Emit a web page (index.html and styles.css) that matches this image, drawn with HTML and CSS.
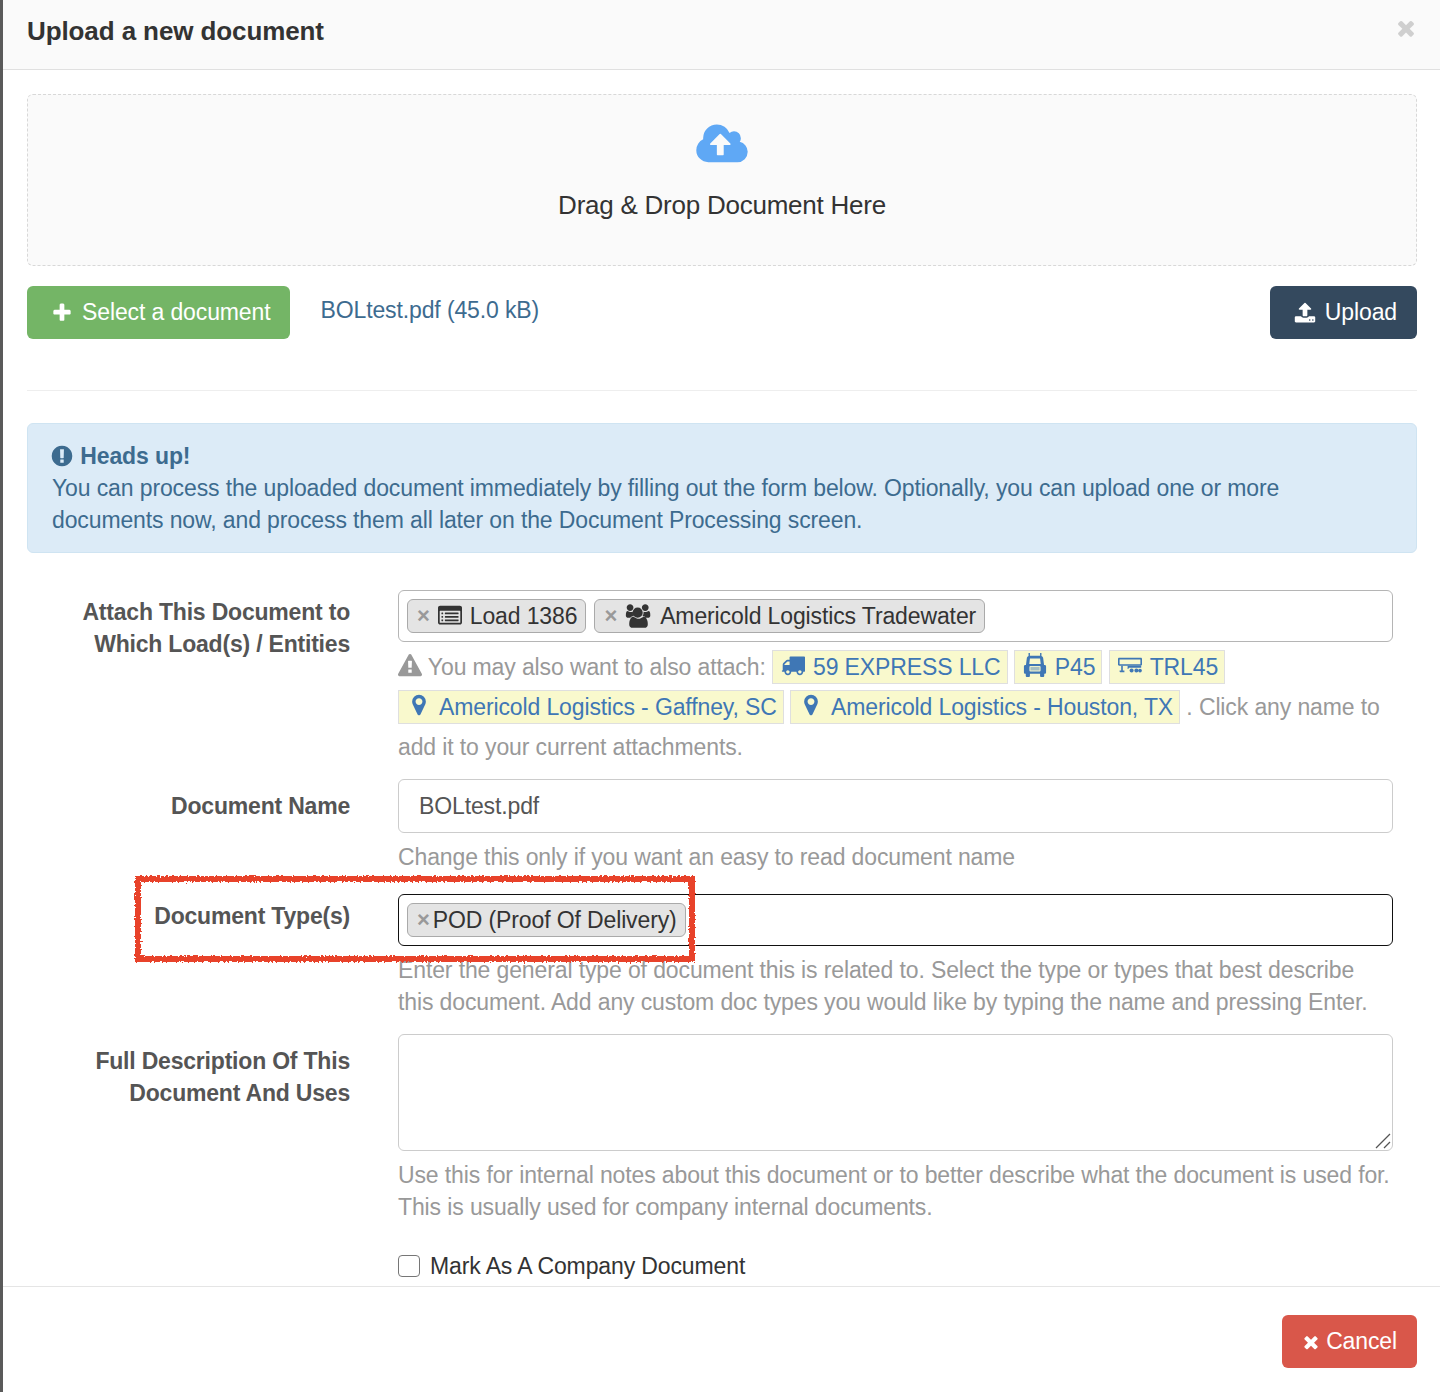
FILE: index.html
```html
<!DOCTYPE html>
<html lang="en">
<head>
    <meta charset="UTF-8">
    <meta name="viewport" content="width=device-width, initial-scale=1.0">
    <title>Upload a new document</title>
    <link rel="stylesheet" href="styles.css">
</head>
<body>

    <svg class="icon-defs" aria-hidden="true">
        <symbol id="i-cloud" viewBox="0 0 1920 1792"><path d="M1280 864q0-14-9-23l-352-352q-9-9-23-9t-23 9l-351 351q-10 12-10 24 0 14 9 23t23 9h224v352q0 13 9.5 22.5t22.5 9.5h192q13 0 22.5-9.5t9.5-22.5v-352h224q13 0 22.5-9.5t9.5-22.5zm640 288q0 159-112.5 271.5t-271.5 112.5h-1088q-185 0-316.5-131.5t-131.5-316.5q0-130 70-240t188-165q-2-30-2-43 0-212 150-362t362-150q156 0 285.5 87t188.5 231q71-62 166-62 106 0 181 75t75 181q0 76-41 138 130 31 213.5 135.5t83.5 238.5z"/></symbol>
        <symbol id="i-plus" viewBox="0 0 1792 1792"><path d="M1600 736v192q0 40-28 68t-68 28h-416v416q0 40-28 68t-68 28h-192q-40 0-68-28t-28-68v-416h-416q-40 0-68-28t-28-68v-192q0-40 28-68t68-28h416v-416q0-40 28-68t68-28h192q40 0 68 28t28 68v416h416q40 0 68 28t28 68z"/></symbol>
        <symbol id="i-upload" viewBox="0 0 1792 1792"><path d="M1344 1472q0-26-19-45t-45-19-45 19-19 45 19 45 45 19 45-19 19-45zm256 0q0-26-19-45t-45-19-45 19-19 45 19 45 45 19 45-19 19-45zm128-224v320q0 40-28 68t-68 28h-1472q-40 0-68-28t-28-68v-320q0-40 28-68t68-28h427q21 56 70.5 92t110.5 36h256q61 0 110.5-36t70.5-92h427q40 0 68 28t28 68zm-325-648q-17 40-59 40h-256v448q0 26-19 45t-45 19h-256q-26 0-45-19t-19-45v-448h-256q-42 0-59-40-17-39 14-69l448-448q18-19 45-19t45 19l448 448q31 30 14 69z"/></symbol>
        <symbol id="i-alert" viewBox="0 0 1792 1792"><path d="M896 128q209 0 385.5 103t279.5 279.5 103 385.5-103 385.5-279.5 279.5-385.5 103-385.5-103-279.5-279.5-103-385.5 103-385.5 279.5-279.5 385.5-103zm128 1247v-190q0-14-9-23.5t-22-9.5h-192q-13 0-23 10t-10 23v190q0 13 10 23t23 10h192q13 0 22-9.5t9-23.5zm-2-344l18-621q0-12-10-18-10-8-24-8h-220q-14 0-24 8-10 6-10 18l17 621q0 10 10 17.5t24 7.5h185q14 0 23.5-7.5t10.5-17.5z"/></symbol>
        <symbol id="i-times" viewBox="0 0 1792 1792"><path d="M1490 1322q0 40-28 68l-136 136q-28 28-68 28t-68-28l-294-294-294 294q-28 28-68 28t-68-28l-136-136q-28-28-28-68t28-68l294-294-294-294q-28-28-28-68t28-68l136-136q28-28 68-28t68 28l294 294 294-294q28-28 68-28t68 28l136 136q28 28 28 68t-28 68l-294 294 294 294q28 28 28 68z"/></symbol>
        <symbol id="i-warning" viewBox="0 0 1792 1792"><path d="M1024 1375v-190q0-14-9.5-23.5t-22.5-9.5h-192q-13 0-22.5 9.5t-9.5 23.5v190q0 14 9.5 23.5t22.5 9.5h192q13 0 22.5-9.5t9.5-23.5zm-2-374l18-459q0-12-10-19-13-11-24-11h-220q-11 0-24 11-10 7-10 21l17 457q0 10 10 16.5t24 6.5h185q14 0 23.5-6.5t10.5-16.5zm-14-934l768 1408q35 63-2 126-17 29-46.5 46t-63.5 17h-1536q-34 0-63.5-17t-46.5-46q-37-63-2-126l768-1408q17-31 47-49t65-18 65 18 47 49z"/></symbol>
        <symbol id="i-marker" viewBox="0 0 1792 1792"><path d="M1152 640q0-106-75-181t-181-75-181 75-75 181 75 181 181 75 181-75 75-181zm256 0q0 109-33 179l-364 774q-16 33-47.5 52t-67.5 19-67.5-19-46.5-52l-365-774q-33-70-33-179 0-212 150-362t362-150 362 150 150 362z"/></symbol>
        <symbol id="i-truck" viewBox="0 0 1792 1792"><path d="M640 1408q0-52-38-90t-90-38-90 38-38 90 38 90 90 38 90-38 38-90zm-384-512h384v-256h-158q-13 0-22 9l-195 195q-9 9-9 22v30zm1280 512q0-52-38-90t-90-38-90 38-38 90 38 90 90 38 90-38 38-90zm256-1088v1024q0 15-4 26.5t-13.5 18.5-16.5 11.5-23.5 6-22.5 2-25.5 0-22.5-.5q0 106-75 181t-181 75-181-75-75-181h-384q0 106-75 181t-181 75-181-75-75-181h-64q-3 0-22.5.5t-25.5 0-22.5-2-23.5-6-16.5-11.5-13.5-18.5-4-26.5q0-26 19-45t45-19v-320q0-8-.5-35t0-38 2.5-34.5 6.5-37 14-30.5 22.5-30l198-198q19-19 50.5-32t58.5-13h160v-192q0-26 19-45t45-19h1024q26 0 45 19t19 45z"/></symbol>
        <symbol id="i-users" viewBox="0 0 2048 1792"><path d="M657 896q-162 5-265 128h-134q-82 0-138-40.5t-56-118.5q0-353 124-353 6 0 43.5 21t97.5 42.5 119 21.5q67 0 133-23-5 37-5 66 0 139 81 256zm1071 637q0 120-73 189.5t-194 69.5h-874q-121 0-194-69.5t-73-189.5q0-53 3.5-103.5t14-109 26.5-108.5 43-97.5 62-81 85.5-53.5 111.5-20q10 0 43 21.5t73 48 107 48 135 21.5 135-21.5 107-48 73-48 43-21.5q61 0 111.5 20t85.5 53.5 62 81 43 97.5 26.5 108.5 14 109 3.5 103.5zm-1088-1277q0 106-75 181t-181 75-181-75-75-181 75-181 181-75 181 75 75 181zm704 384q0 159-112.5 271.5t-271.5 112.5-271.5-112.5-112.5-271.5 112.5-271.5 271.5-112.5 271.5 112.5 112.5 271.5zm576 225q0 78-56 118.5t-138 40.5h-134q-103-123-265-128 81-117 81-256 0-29-5-66 66 23 133 23 59 0 119-21.5t97.5-42.5 43.5-21q124 0 124 353zm-128-609q0 106-75 181t-181 75-181-75-75-181 75-181 181-75 181 75 75 181z"/></symbol>
        <symbol id="i-list" viewBox="0 0 1792 1792"><path d="M384 1184v64q0 13-9.5 22.5t-22.5 9.5h-64q-13 0-22.5-9.5t-9.5-22.5v-64q0-13 9.5-22.5t22.5-9.5h64q13 0 22.5 9.5t9.5 22.5zm0-256v64q0 13-9.5 22.5t-22.5 9.5h-64q-13 0-22.5-9.5t-9.5-22.5v-64q0-13 9.5-22.5t22.5-9.5h64q13 0 22.5 9.5t9.5 22.5zm0-256v64q0 13-9.5 22.5t-22.5 9.5h-64q-13 0-22.5-9.5t-9.5-22.5v-64q0-13 9.5-22.5t22.5-9.5h64q13 0 22.5 9.5t9.5 22.5zm1152 512v64q0 13-9.5 22.5t-22.5 9.5h-960q-13 0-22.5-9.5t-9.5-22.5v-64q0-13 9.5-22.5t22.5-9.5h960q13 0 22.5 9.5t9.5 22.5zm0-256v64q0 13-9.5 22.5t-22.5 9.5h-960q-13 0-22.5-9.5t-9.5-22.5v-64q0-13 9.5-22.5t22.5-9.5h960q13 0 22.5 9.5t9.5 22.5zm0-256v64q0 13-9.5 22.5t-22.5 9.5h-960q-13 0-22.5-9.5t-9.5-22.5v-64q0-13 9.5-22.5t22.5-9.5h960q13 0 22.5 9.5t9.5 22.5zm128 704v-832q0-13-9.5-22.5t-22.5-9.5h-1472q-13 0-22.5 9.5t-9.5 22.5v832q0 13 9.5 22.5t22.5 9.5h1472q13 0 22.5-9.5t9.5-22.5zm128-1088v1088q0 66-47 113t-113 47h-1472q-66 0-113-47t-47-113v-1088q0-66 47-113t113-47h1472q66 0 113 47t47 113z"/></symbol>
        <!-- semi truck, front view -->
        <symbol id="i-semi" viewBox="0 0 24 26"><path fill-rule="evenodd" d="M5 0h1.500v3h11V0H19v3.200c1 .3 1.600 1 1.800 2l1 7.800h.7c.8 0 1.500.7 1.500 1.500V21c0 .8-.7 1.500-1.500 1.500H22V25c0 .6-.4 1-1 1h-2.500c-.6 0-1-.4-1-1v-2.500h-11V25c0 .6-.4 1-1 1H3c-.6 0-1-.4-1-1v-2.500h-.5C.7 22.500 0 21.800 0 21v-6.500C0 13.700.7 13 1.500 13h.7l1-7.800c.2-1 .8-1.700 1.800-2zM6.500 6 5.800 12h12.400l-.7-6zM7 14c-.6 0-1 .4-1 1v4c0 .6.4 1 1 1h10c.6 0 1-.4 1-1v-4c0-.6-.4-1-1-1z"/><path opacity=".45" d="M7 15h10v4H7z"/></symbol>
        <!-- flatbed trailer, side view -->
        <symbol id="i-trailer" viewBox="0 0 30 20"><path fill-rule="evenodd" d="M1.500 1h27c.8 0 1.500.7 1.500 1.500v7c0 .8-.7 1.500-1.500 1.500H1.500C.7 11 0 10.300 0 9.500v-7C0 1.700.7 1 1.500 1zM2 3v6h26V3z"/><path d="M4 11h2v6h2v2H3c-.6 0-1-.4-1-1v-1h2zM12 11h17v2.500H14.500c-.8 0-1.500.7-1.500 1.500h-1z"/><circle cx="17" cy="17" r="2.500"/><circle cx="23" cy="17" r="2.500"/><circle cx="27.500" cy="17" r="2.300"/></symbol>
    </svg>

    <div class="modal">
        <div class="modal-header">
            <h4>Upload a new document</h4>
            <svg class="close-icon"><use href="#i-times"/></svg>
        </div>

        <div class="modal-body">
            <!-- Drop area -->
            <div class="dropzone">
                <svg class="cloud-icon"><use href="#i-cloud"/></svg>
                <div>Drag &amp; Drop Document Here</div>
            </div>

            <div class="file-row">
                <button class="btn btn-green"><svg class="btn-icon"><use href="#i-plus"/></svg>Select a document</button>
                <span class="file-name">BOLtest.pdf (45.0 kB)</span>
                <button class="btn btn-navy"><svg class="btn-icon"><use href="#i-upload"/></svg>Upload</button>
            </div>

            <hr>

            <div class="alert">
                <strong><svg class="alert-icon"><use href="#i-alert"/></svg> Heads up!</strong><br>
                You can process the uploaded document immediately by filling out the form below. Optionally, you can upload one or more documents now, and process them all later on the Document Processing screen.
            </div>

            <!-- Attachments -->
            <div class="form-row row-attach">
                <label class="label-short">Attach This Document to Which Load(s) / Entities</label>
                <div>
                    <div class="tag-input">
                        <span class="tag"><span class="tag-x">×</span><svg class="tag-icon"><use href="#i-list"/></svg>Load 1386</span>
                        <span class="tag"><span class="tag-x">×</span><svg class="tag-icon tag-icon-wide"><use href="#i-users"/></svg>Americold Logistics Tradewater</span>
                    </div>
                    <div class="help help-links">
                        <svg class="warn-icon"><use href="#i-warning"/></svg> You may also want to also attach:
                        <a class="suggest"><svg class="suggest-icon"><use href="#i-truck"/></svg>59 EXPRESS LLC</a>
                        <a class="suggest"><svg class="suggest-icon"><use href="#i-semi"/></svg>P45</a>
                        <a class="suggest"><svg class="suggest-icon"><use href="#i-trailer"/></svg>TRL45</a>
                        <a class="suggest"><svg class="suggest-icon"><use href="#i-marker"/></svg>Americold Logistics - Gaffney, SC</a>
                        <a class="suggest"><svg class="suggest-icon"><use href="#i-marker"/></svg>Americold Logistics - Houston, TX</a>
                        . Click any name to add it to your current attachments.
                    </div>
                </div>
            </div>

            <div class="form-row row-name">
                <label>Document Name</label>
                <div>
                    <input class="text-input" type="text" value="BOLtest.pdf">
                    <div class="help">Change this only if you want an easy to read document name</div>
                </div>
            </div>

            <div class="form-row">
                <label class="label-short">Document Type(s)</label>
                <div>
                    <div class="tag-input tag-input-focus">
                        <span class="tag"><span class="tag-x tag-x-tight">×</span>POD (Proof Of Delivery)</span>
                    </div>
                    <div class="help">Enter the general type of document this is related to. Select the type or types that best describe this document. Add any custom doc types you would like by typing the name and pressing Enter.</div>
                </div>
            </div>

            <div class="form-row">
                <label>Full Description Of This Document And Uses</label>
                <div>
                    <div class="textarea-wrap">
                        <textarea class="text-area"></textarea>
                        <svg class="resize-grip" viewBox="0 0 16 16"><path d="M1 15 15 1M9 15l6-6" /></svg>
                    </div>
                    <div class="help">Use this for internal notes about this document or to better describe what the document is used for. This is usually used for company internal documents.</div>
                </div>
            </div>

            <div class="form-row row-check">
                <span></span>
                <label class="check-label"><input type="checkbox"> Mark As A Company Document</label>
            </div>
        </div>

        <div class="modal-footer">
            <button class="btn btn-red"><svg class="btn-icon btn-icon-small"><use href="#i-times"/></svg>Cancel</button>
        </div>

        <!-- hand drawn highlight on top of the form -->
        <svg class="scribble" width="570" height="97" viewBox="0 0 570 97">
            <filter id="rough" x="-2%" y="-10%" width="104%" height="120%">
                <feTurbulence type="fractalNoise" baseFrequency="0.5" numOctaves="2" seed="4"/>
                <feDisplacementMap in="SourceGraphic" scale="5"/>
            </filter>
            <rect x="6" y="8" width="554" height="80" fill="none" stroke="#e8432a" stroke-width="6" filter="url(#rough)"/>
        </svg>
    </div>

</body>
</html>
```

FILE: styles.css
```css
* {
    box-sizing: border-box;
}

body {
    margin: 0;
    height: 1392px;
    overflow: hidden;
    background: #5a5a5a;
    font-family: "Liberation Sans", Arial, sans-serif;
    font-size: 23px;
    letter-spacing: -0.12px;
    line-height: 32px;
    color: #333;
}

.icon-defs {
    display: none;
}

svg {
    fill: currentColor;
}

.modal {
    position: relative;
    margin-left: 3px;
    height: 1392px;
    background: white;
    display: flex;
    flex-direction: column;
}

.modal-header {
    height: 70px;
    flex: none;
    padding: 0 24px;
    background: #fafafa;
    border-bottom: 1px solid #e0e0e0;
    display: flex;
    justify-content: space-between;
    align-items: center;
}

.modal-header h4 {
    margin: 0 0 8px;
    font-size: 26px;
    font-weight: bold;
    letter-spacing: -0.1px;
    color: #333;
}

.close-icon {
    width: 24px;
    height: 24px;
    margin: 0 -2px 14px 0;
    color: #cfcfcf;
}

.modal-body {
    flex: 1;
    overflow: hidden;
    padding: 24px 23px 0 24px;
}

.dropzone {
    height: 172px;
    background: #fafafa;
    border: 1px dashed #d8d8d8;
    border-radius: 6px;
    display: flex;
    flex-direction: column;
    align-items: center;
    padding-top: 26px;
    font-size: 26px;
    letter-spacing: -0.24px;
}

.cloud-icon {
    width: 52px;
    height: 48px;
    color: #5fa8f5;
    margin-bottom: 20px;
}

.file-row {
    margin-top: 20px;
    display: flex;
    align-items: flex-start;
}

.file-name {
    margin: 8px 0 0 30px;
    color: #3d6b8f;
}

.btn {
    height: 53px;
    padding: 0 20px 0 24px;
    border: none;
    border-radius: 6px;
    color: white;
    font-family: inherit;
    font-size: 23px;
    letter-spacing: -0.12px;
    display: inline-flex;
    align-items: center;
}

.btn-green {
    background: #74b566;
}

.btn-navy {
    background: #34495e;
    margin-left: auto;
}

.btn-red {
    background: #d9574a;
    padding-left: 19px;
}

.btn-icon {
    width: 22px;
    height: 22px;
    margin-right: 9px;
}

.btn-icon-small {
    width: 20px;
    height: 20px;
    margin-right: 5px;
}

hr {
    margin: 51px 0 32px;
    border: none;
    border-top: 1px solid #eee;
}

.alert {
    height: 130px;
    padding: 16px 24px;
    background: #dcebf7;
    border: 1px solid #cfe4f2;
    border-radius: 6px;
    color: #3d6b8f;
}

.alert-icon {
    width: 24px;
    height: 24px;
    margin-left: -2px;
    vertical-align: -4px;
}

.form-row {
    margin-top: 16px;
    padding-right: 24px;
    display: grid;
    grid-template-columns: 323px 1fr;
    column-gap: 48px;
}

.form-row label {
    padding-top: 11px;
    text-align: right;
    font-weight: bold;
    letter-spacing: -0.2px;
    color: #555;
}

.form-row .label-short {
    padding-top: 6px;
}

.row-attach {
    margin-top: 37px;
}

.row-name {
    margin-top: 12px;
}

.row-name + .form-row {
    margin-top: 21px;
}

.tag-input {
    height: 52px;
    padding: 8px;
    border: 1px solid #b5b5b5;
    border-radius: 6px;
    display: flex;
    gap: 8px;
    align-items: flex-start;
}

.tag-input-focus {
    border-color: #111;
}

.tag {
    height: 34px;
    padding: 0 8px 0 9px;
    background: #e4e4e4;
    border: 1px solid #aaa;
    border-radius: 6px;
    display: inline-flex;
    align-items: center;
    white-space: nowrap;
}

.tag-x {
    color: #999;
    font-weight: bold;
    font-size: 22px;
    margin-right: 8px;
}

.tag-x-tight {
    margin-right: 3px;
}

.tag-icon {
    width: 24px;
    height: 24px;
    margin-right: 8px;
}

.tag-icon-wide {
    width: 27px;
}

.help {
    margin-top: 8px;
    color: #999;
}

.help-links {
    margin-top: 5px;
    line-height: 40px;
}

.warn-icon {
    width: 24px;
    height: 24px;
    vertical-align: -3px;
}

.suggest {
    display: inline-block;
    height: 34px;
    line-height: 32px;
    padding: 0 6px 0 8px;
    background: #f9f9cd;
    border: 1px solid #dfdfdf;
    color: #3f77b5;
}

.suggest-icon {
    width: 24px;
    height: 24px;
    margin-right: 8px;
    vertical-align: -2px;
}

.text-input {
    display: block;
    width: 100%;
    height: 54px;
    padding: 0 20px;
    border: 1px solid #ccc;
    border-radius: 6px;
    font-family: inherit;
    font-size: 23px;
    letter-spacing: -0.12px;
    color: #555;
}

.textarea-wrap {
    position: relative;
    height: 117px;
}

.text-area {
    display: block;
    width: 100%;
    height: 100%;
    border: 1px solid #ccc;
    border-radius: 6px;
    resize: none;
}

.resize-grip {
    position: absolute;
    right: 2px;
    bottom: 2px;
    width: 16px;
    height: 16px;
    fill: none;
    stroke: #555;
    stroke-width: 1.300;
}

.row-check {
    margin-top: 27px;
}

.form-row .check-label {
    padding: 0;
    font-weight: normal;
    letter-spacing: -0.12px;
    color: #333;
    text-align: left;
    display: flex;
    align-items: center;
    gap: 10px;
}

.check-label input {
    appearance: none;
    width: 22px;
    height: 22px;
    margin: 0;
    background: white;
    border: 1.500px solid #767676;
    border-radius: 4px;
}

.modal-footer {
    height: 106px;
    flex: none;
    padding: 28px 23px 0 0;
    border-top: 1px solid #e5e5e5;
    display: flex;
    justify-content: flex-end;
    align-items: flex-start;
}

.scribble {
    position: absolute;
    left: 129px;
    top: 871px;
}
```
